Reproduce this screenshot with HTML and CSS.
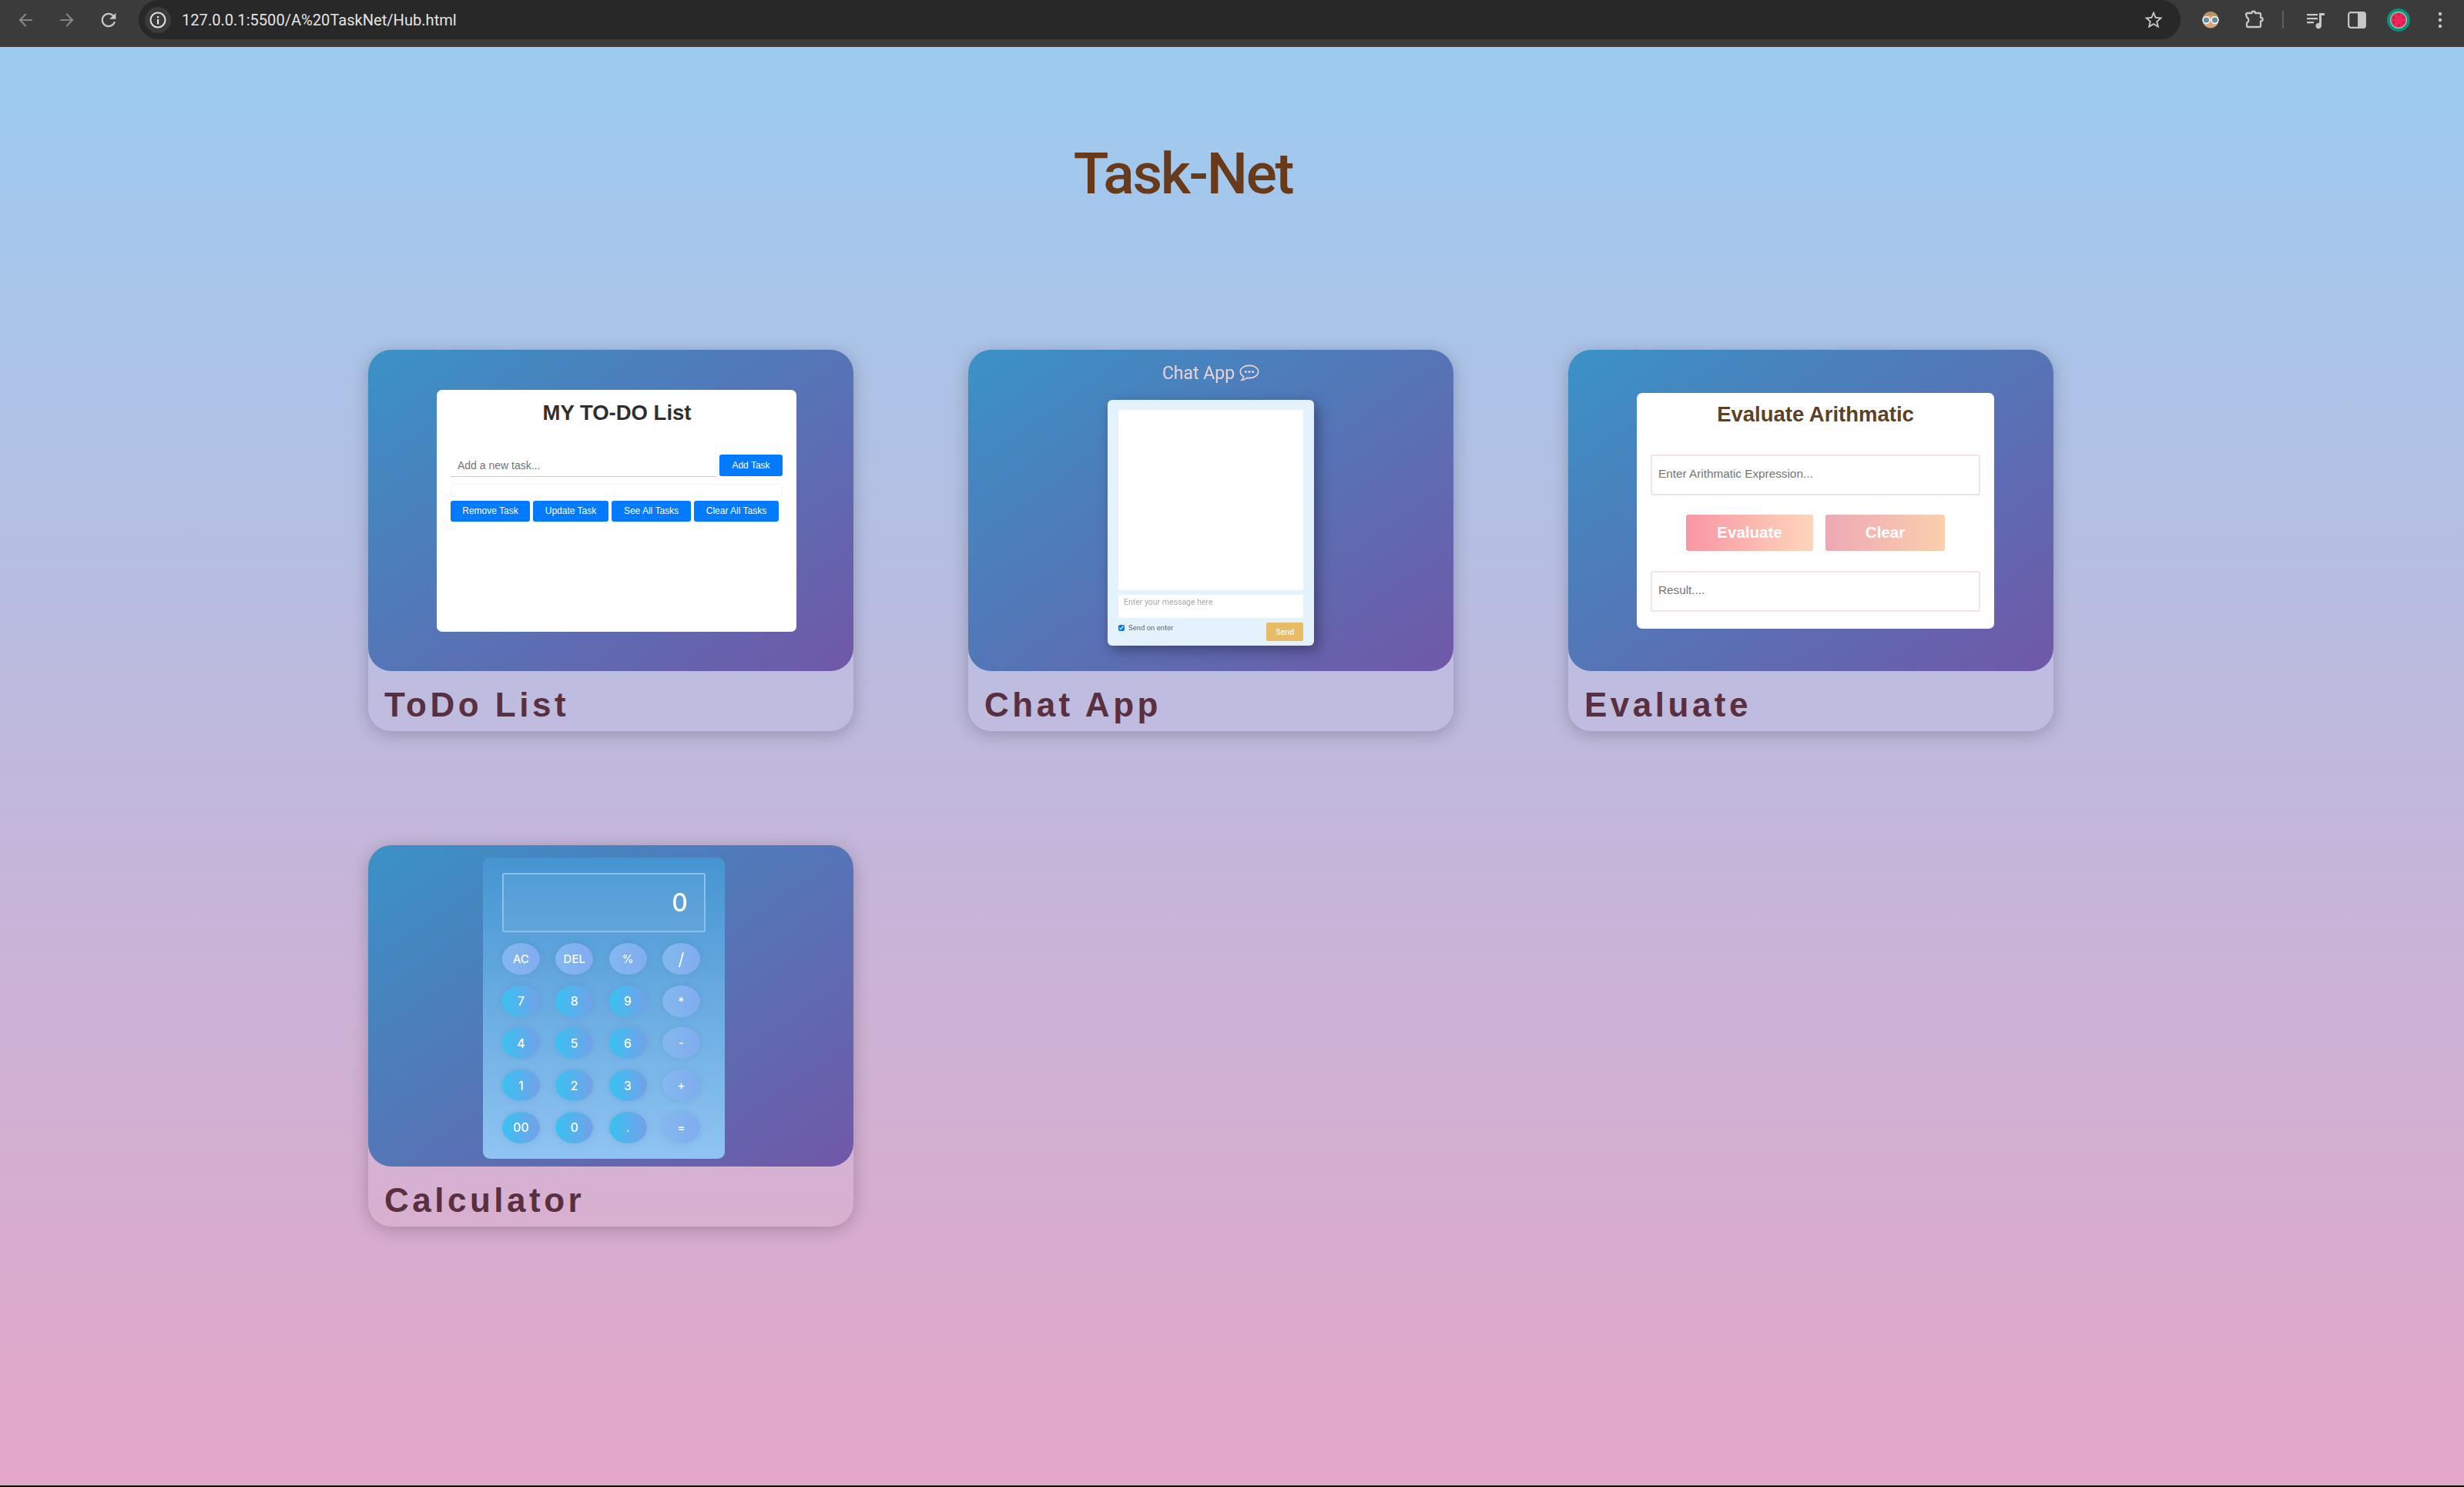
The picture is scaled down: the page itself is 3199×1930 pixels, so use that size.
FILE: index.html
```html
<!DOCTYPE html>
<html lang="en">
<head>
  <meta charset="UTF-8">
  <meta name="viewport" content="width=device-width, initial-scale=1.0">
  <title>Task-Net</title>
  <link rel="stylesheet" href="styles.css">
</head>
<body>
  <header class="toolbar">
    <div class="tool dim"><svg width="26" height="26" viewBox="0 0 24 24"><path d="M20 11H7.8l5.6-5.6L12 4l-8 8 8 8 1.4-1.4L7.8 13H20z"/></svg></div>
    <div class="tool dim"><svg width="26" height="26" viewBox="0 0 24 24"><path d="M4 11h12.2l-5.6-5.6L12 4l8 8-8 8-1.4-1.4 5.6-5.6H4z"/></svg></div>
    <div class="tool"><svg width="28" height="28" viewBox="0 0 24 24"><path d="M17.65 6.35C16.2 4.9 14.21 4 12 4c-4.42 0-7.99 3.58-7.99 8s3.57 8 7.99 8c3.73 0 6.84-2.55 7.73-6h-2.08c-.82 2.33-3.04 4-5.65 4-3.31 0-6-2.69-6-6s2.69-6 6-6c1.66 0 3.14.69 4.22 1.78L13 11h7V4l-2.35 2.35z"/></svg></div>
    <div class="omnibox">
      <span class="site-info">
        <svg width="24" height="24" viewBox="0 0 24 24"><circle cx="12" cy="12" r="9.5" fill="none" stroke="#e3e3e3" stroke-width="2"/><rect x="11" y="11" width="2.2" height="6.5" fill="#e3e3e3"/><rect x="11" y="7" width="2.2" height="2.3" fill="#e3e3e3"/></svg>
      </span>
      <span class="url">127.0.0.1:5500/A%20TaskNet/Hub.html</span>
      <svg class="star" width="28" height="28" viewBox="0 0 24 24"><path d="M22 9.24l-7.19-.62L12 2 9.19 8.63 2 9.24l5.46 4.73L5.82 21 12 17.27 18.18 21l-1.63-7.03L22 9.24zM12 15.4l-3.76 2.27 1-4.28-3.32-2.88 4.38-.38L12 6.1l1.71 4.04 4.38.38-3.32 2.88 1 4.28L12 15.4z"/></svg>
    </div>
    <div class="tool first-ext">
      <svg width="24" height="24" viewBox="0 0 24 24">
        <circle cx="12" cy="12" r="10.5" fill="#d9a57c"/>
        <path d="M2 10C3 3 8 1 12 1s9 2 10 9c-3-3-6-4-10-4S5 7 2 10z" fill="#b8925f"/>
        <circle cx="6.5" cy="12" r="4.4" fill="#5f8fa3" stroke="#f4f4f4" stroke-width="1.6"/>
        <circle cx="17.5" cy="12" r="4.4" fill="#5f8fa3" stroke="#f4f4f4" stroke-width="1.6"/>
        <rect x="10.5" y="11" width="3" height="1.4" fill="#f4f4f4"/>
      </svg>
    </div>
    <div class="tool"><svg width="27" height="27" viewBox="0 0 27 27"><path d="M3 6.5a1.5 1.5 0 0 1 1.5-1.5h6c0-3 4.500-3 4.500 0h5.500a1.500 1.500 0 0 1 1.500 1.500v4.500c3.500 0 3.500 4.500 0 4.500v6a1.500 1.500 0 0 1-1.500 1.500h-15a1.500 1.500 0 0 1-1.500-1.500v-4c3-1 3-5.500 0-7z" fill="none" stroke="#c7c7c7" stroke-width="2.300" stroke-linejoin="round"/></svg></div>
    <div class="divider"></div>
    <div class="tool"><svg width="26" height="26" viewBox="0 0 26 26"><path d="M2 5h14v2.200H2zM2 10h14v2.200H2zM2 15h9v2.200H2zM18 4h7v3h-4v13.500a3.800 3.800 0 1 1-3-3.700z"/></svg></div>
    <div class="tool"><svg width="24" height="24" viewBox="0 0 24 24"><rect x="1.200" y="2.200" width="21.600" height="19.600" rx="2.500" fill="none" stroke="#c7c7c7" stroke-width="2.200"/><path d="M13 2h7.500A2.500 2.500 0 0 1 23 4.500v15a2.500 2.500 0 0 1-2.500 2.500H13z"/></svg></div>
    <div class="tool"><svg width="30" height="30" viewBox="0 0 30 30">
      <circle cx="15" cy="15" r="15" fill="#0c8f7c"/>
      <circle cx="15" cy="15" r="11" fill="#8fd7a8"/>
      <circle cx="15" cy="15" r="9.800" fill="#ee2558"/>
      <g fill="#4a1020"><circle cx="15" cy="8" r=".8"/><circle cx="21" cy="12" r=".8"/><circle cx="21" cy="18" r=".8"/><circle cx="15" cy="22" r=".8"/><circle cx="9" cy="18" r=".8"/><circle cx="9" cy="12" r=".8"/></g>
    </svg></div>
    <div class="tool"><svg width="8" height="24" viewBox="0 0 8 24"><circle cx="4" cy="4" r="2.200"/><circle cx="4" cy="12" r="2.200"/><circle cx="4" cy="20" r="2.200"/></svg></div>
  </header>

  <main class="hub">
    <h1 class="hub-title">Task-Net</h1>

    <div class="cards">

      <section class="card">
        <div class="thumb">
          <div class="todo">
            <h2>MY TO-DO List</h2>
            <div class="todo-add">
              <input type="text" placeholder="Add a new task...">
              <button class="blue-btn add-btn">Add Task</button>
            </div>
            <div class="todo-list"></div>
            <div class="todo-actions">
              <button class="blue-btn w-remove">Remove Task</button>
              <button class="blue-btn w-update">Update Task</button>
              <button class="blue-btn w-see">See All Tasks</button>
              <button class="blue-btn w-clear">Clear All Tasks</button>
            </div>
          </div>
        </div>
        <h3>ToDo List</h3>
      </section>

      <section class="card">
        <div class="thumb thumb-chat">
          <div class="chat-title">Chat App
            <svg width="26" height="22" viewBox="0 0 25 21"><path d="M12.500 1.200C6.300 1.200 1.300 4.600 1.300 9c0 2.500 1.600 4.600 4.100 6-.2 1.700-1.100 3.300-2.300 4.500 2.600-.2 5-1.300 6.600-2.900 1 .2 1.800.3 2.800.3 6.200 0 11.200-3.500 11.200-7.900s-5-7.800-11.200-7.800z" fill="none" stroke="#ead3d8" stroke-width="1.600"/><circle cx="8" cy="9" r="1.500" fill="#ead3d8"/><circle cx="12.500" cy="9" r="1.500" fill="#ead3d8"/><circle cx="17" cy="9" r="1.500" fill="#ead3d8"/></svg>
          </div>
          <div class="chat">
            <div class="chat-log"></div>
            <textarea placeholder="Enter your message here"></textarea>
            <div class="chat-foot">
              <label><input type="checkbox" checked> Send on enter</label>
              <button class="send">Send</button>
            </div>
          </div>
        </div>
        <h3>Chat App</h3>
      </section>

      <section class="card">
        <div class="thumb">
          <div class="evaluate">
            <h2>Evaluate Arithmatic</h2>
            <input type="text" placeholder="Enter Arithmatic Expression...">
            <div class="eval-btns">
              <button class="eval-go">Evaluate</button>
              <button class="eval-clear">Clear</button>
            </div>
            <input type="text" placeholder="Result....">
          </div>
        </div>
        <h3>Evaluate</h3>
      </section>

      <section class="card">
        <div class="thumb thumb-calc">
          <div class="calc">
            <div class="calc-screen">0</div>
            <div class="calc-keys">
              <button class="op">AC</button><button class="op">DEL</button><button class="op">%</button><button class="op slash">/</button>
              <button>7</button><button>8</button><button>9</button><button class="op">*</button>
              <button>4</button><button>5</button><button>6</button><button class="op">-</button>
              <button>1</button><button>2</button><button>3</button><button class="op">+</button>
              <button>00</button><button>0</button><button>.</button><button class="op">=</button>
            </div>
          </div>
        </div>
        <h3>Calculator</h3>
      </section>

    </div>
  </main>
</body>
</html>
```

FILE: styles.css
```css
* {
  box-sizing: border-box;
}

body {
  margin: 0;
  height: 1930px;
  overflow: hidden;
  display: flex;
  flex-direction: column;
  font-family: "Liberation Sans", sans-serif;
  border-bottom: 2px solid #000;
}

/* browser bar */
.toolbar {
  height: 61px;
  flex-shrink: 0;
  display: flex;
  align-items: flex-start;
  padding-left: 6px;
  padding-right: 4px;
  background: #3b3b3b;
  border-bottom: 1px solid #454545;
}

.tool {
  width: 54px;
  height: 51px;
  flex-shrink: 0;
  display: flex;
  align-items: center;
  justify-content: center;
}

.tool svg {
  fill: #c7c7c7;
}

.tool.dim svg {
  fill: #858585;
}

.omnibox {
  flex: 1;
  height: 51px;
  margin-left: 12px;
  display: flex;
  align-items: center;
  background: #282828;
  border-radius: 26px;
}

.site-info {
  width: 34px;
  height: 34px;
  margin-left: 8px;
  display: flex;
  align-items: center;
  justify-content: center;
  background: #3b3b3b;
  border-radius: 50%;
}

.url {
  margin-left: 14px;
  flex: 1;
  font-family: "Roboto", sans-serif;
  font-size: 20.100px;
  color: #e3e3e3;
}

.star {
  margin-right: 21px;
  fill: #c7c7c7;
}

.first-ext {
  margin-left: 12px;
  margin-right: 2px;
}

.divider {
  width: 2px;
  height: 23px;
  margin: 14px 14px 0 10px;
  background: #5f5f5f;
}

/* page */
.hub {
  flex: 1;
  padding: 120px 127px 0 0;
  background: linear-gradient(180deg, #9ccbf0 0%, #e4a6c8 100%);
}

.hub-title {
  margin: 0;
  font-family: "Roboto", sans-serif;
  font-size: 75px;
  font-weight: 500;
  letter-spacing: -2.3px;
  line-height: 88px;
  text-align: center;
  color: #683a19;
}

.cards {
  margin: 185px 0 0 478px;
  display: grid;
  grid-template-columns: repeat(3, 630px);
  column-gap: 149px;
  row-gap: 148px;
}

.card {
  height: 495px;
  background: rgba(255, 255, 255, 0.04);
  border-radius: 30px;
  box-shadow: 0 4px 22px rgba(0, 0, 0, 0.22);
}

.card h3 {
  margin: 0;
  padding: 19px 0 0 21px;
  font-size: 44px;
  line-height: 50px;
  font-weight: bold;
  letter-spacing: 4.500px;
  color: #5a2f40;
}

.thumb {
  height: 417px;
  display: flex;
  align-items: center;
  background: linear-gradient(145deg, #3a92c6 0%, #7058a8 100%);
  border-radius: 30px;
}

/* todo thumbnail */
.todo {
  width: 467px;
  height: 314px;
  margin-left: 89px;
  padding: 0 17px 0 18px;
  background: #fff;
  border-radius: 7px;
}

.todo h2 {
  margin: 14px 0 0;
  height: 32px;
  font-size: 27.500px;
  line-height: 32px;
  text-align: center;
  color: #2f2f2f;
}

.todo-add {
  margin-top: 38px;
  display: flex;
  gap: 4px;
}

.todo-add input {
  width: 345px;
  height: 29px;
  padding: 0 9px;
  border: none;
  border-bottom: 1px solid #ccc;
  font-family: "Liberation Sans", sans-serif;
  font-size: 14px;
  outline: none;
}

.blue-btn {
  height: 27px;
  padding: 0;
  border: none;
  border-radius: 3px;
  font-family: "Liberation Sans", sans-serif;
  font-size: 12px;
  color: #fff;
  background: #007bff;
}

.add-btn {
  width: 82px;
  height: 28px;
}

.todo-list {
  width: 431px;
  height: 17px;
  margin-top: 9px;
  border: 1px solid #f3f3f3;
  border-radius: 5px;
}

.todo-actions {
  margin-top: 5px;
  display: flex;
  gap: 4px;
}

.w-remove { width: 103px; }
.w-update { width: 98px; }
.w-see { width: 103px; }
.w-clear { width: 110px; }

/* chat thumbnail */
.thumb-chat {
  flex-direction: column;
  justify-content: flex-start;
}

.chat-title {
  margin-top: 15px;
  height: 30px;
  display: flex;
  align-items: center;
  gap: 6px;
  font-family: "Roboto", sans-serif;
  font-size: 23px;
  font-weight: 400;
  color: #ead3d8;
  filter: blur(0.3px);
}

.chat {
  width: 268px;
  height: 319px;
  margin-top: 20px;
  padding: 13px 14px 0;
  background: #e3f2fd;
  border-radius: 6px;
  box-shadow: 5px 6px 18px rgba(0, 0, 0, 0.35);
  filter: blur(0.4px);
}

.chat-log {
  height: 234px;
  background: #fff;
  border-radius: 2px;
}

.chat textarea {
  display: block;
  width: 100%;
  height: 30px;
  margin-top: 6px;
  padding: 3px 7px;
  border: none;
  border-radius: 2px;
  resize: none;
  outline: none;
  overflow: hidden;
  font-family: "Roboto", sans-serif;
  font-size: 10.500px;
  background: #fff;
}

.chat textarea::placeholder {
  color: #aaa;
}

.chat-foot {
  margin-top: 6px;
  display: flex;
  justify-content: space-between;
  align-items: flex-start;
}

.chat-foot label {
  margin-top: 1px;
  display: flex;
  align-items: center;
  gap: 5px;
  font-family: "Roboto", sans-serif;
  font-size: 9.500px;
  color: #666;
}

.chat-foot input {
  width: 8px;
  height: 8px;
  margin: 0;
  accent-color: #0075ff;
}

.send {
  width: 48px;
  height: 24px;
  padding: 0;
  border: none;
  border-radius: 2px;
  font-family: "Roboto", sans-serif;
  font-size: 10.500px;
  font-weight: 500;
  color: #fff;
  background: #e8bc67;
}

/* evaluate thumbnail */
.evaluate {
  width: 464px;
  height: 306px;
  margin-left: 89px;
  padding: 0 18px;
  background: #fff;
  border-radius: 7px;
}

.evaluate h2 {
  margin: 13px 0 0;
  height: 30px;
  font-size: 27.500px;
  line-height: 30px;
  text-align: center;
  color: #5b4226;
}

.evaluate input {
  display: block;
  width: 428px;
  height: 53px;
  padding: 0 8px 2px;
  border: 2px solid #f0e4e4;
  border-radius: 3px;
  font-family: "Liberation Sans", sans-serif;
  font-size: 15.300px;
  outline: none;
}

.evaluate h2 + input {
  margin-top: 37px;
}

.eval-btns {
  margin: 25px 0 26px;
  display: flex;
  justify-content: center;
  gap: 16px;
}

.eval-btns button {
  height: 47px;
  padding: 0;
  border: none;
  border-radius: 3px;
  font-family: "Liberation Sans", sans-serif;
  font-size: 20.500px;
  font-weight: bold;
  color: #fff;
}

.eval-go {
  width: 165px;
  background: linear-gradient(90deg, #f996a5, #fed6bb);
}

.eval-clear {
  width: 155px;
  background: linear-gradient(90deg, #eda9b5, #fbcfad);
}

/* calculator thumbnail */
.thumb-calc {
  align-items: flex-start;
}

.calc {
  width: 314px;
  height: 391px;
  margin: 16px 0 0 149px;
  padding: 20px 25px 0;
  background: linear-gradient(180deg, #4595d2, #8fc4f2);
  border-radius: 9px;
  font-family: "Inter", sans-serif;
  filter: blur(0.3px);
}

.calc-screen {
  width: 264px;
  height: 77px;
  padding: 0 21px 0 0;
  border: 2px solid #8cc0e6;
  border-radius: 2px;
  font-size: 32px;
  font-weight: 500;
  line-height: 73px;
  text-align: right;
  color: #fff;
  background: rgba(255, 255, 255, 0.06);
}

.calc-keys {
  margin-top: 14px;
  display: grid;
  grid-template-columns: repeat(4, 49px);
  grid-auto-rows: 41px;
  column-gap: 20.300px;
  row-gap: 13.700px;
}

.calc-keys button {
  padding: 0;
  border: none;
  border-radius: 50%;
  font-family: "Inter", sans-serif;
  font-size: 16px;
  font-weight: 500;
  color: #fff;
  background: linear-gradient(90deg, #38c2f2, #74a0e8);
  box-shadow: 0 0 10px rgba(0, 0, 0, 0.08);
}

.calc-keys .op {
  font-size: 15px;
  background: linear-gradient(90deg, #84b8ee, #80acf0);
}

.calc-keys .slash {
  font-size: 22px;
  font-weight: 400;
}
```
